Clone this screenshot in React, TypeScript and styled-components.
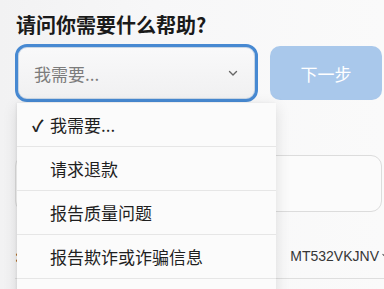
import React from "react";
import styled, { createGlobalStyle } from "styled-components";

const GlobalStyle = createGlobalStyle`
  html, body {
    margin: 0;
    padding: 0;
    background: #f6f6f7;
    overflow: hidden;
  }
  body {
    font-family: "Inter", "Noto Sans CJK SC", sans-serif;
    color: #1c1c1e;
  }
`;

const Page = styled.div`
  display: flex;
  flex-direction: column;
  width: 384px;
  height: 289px;
  box-sizing: border-box;
  padding: 11px 2px 0 15px;
  background: linear-gradient(90deg, #f2f2f3 0%, #f7f7f8 40%, #fafafa 100%);
`;

const Title = styled.h2`
  margin: 0 0 0 1px;
  font-family: "Noto Sans CJK SC", sans-serif;
  font-size: 20px;
  font-weight: 700;
  line-height: 28px;
  color: #1a1a1a;
`;

const TopRow = styled.div`
  display: flex;
  align-items: center;
  gap: 12px;
  margin-top: 5px;
`;

const SelectWrap = styled.div`
  position: relative;
  width: 243px;
  flex-shrink: 0;
`;

const SelectBox = styled.div`
  display: flex;
  align-items: center;
  justify-content: space-between;
  height: 58px;
  box-sizing: border-box;
  padding: 0 16px 0 16px;
  border: 3px solid #4789d2;
  border-radius: 12px;
  background: linear-gradient(180deg, #f9f9fa 0%, #f0f0f1 100%);
  box-shadow: inset 0 0 0 1px #c9d6e4;
`;

const Placeholder = styled.span`
  font-family: "Noto Sans CJK SC", sans-serif;
  font-size: 17px;
  color: #7c7c7c;
`;

const NextButton = styled.button`
  flex: 1;
  height: 54px;
  border: none;
  border-radius: 10px;
  background: #a9c8eb;
  color: #ffffff;
  font-family: "Noto Sans CJK SC", sans-serif;
  font-size: 17px;
`;

const Menu = styled.div`
  position: absolute;
  top: 59px;
  left: 2px;
  width: 259px;
  padding-bottom: 30px;
  background: #fbfbfb;
  box-shadow: 0 4px 14px rgba(0, 0, 0, 0.12), -1px 0 2px rgba(0, 0, 0, 0.06);
  z-index: 5;
`;

const MenuItem = styled.div`
  display: flex;
  align-items: center;
  height: 43px;
  padding-left: 15px;
  border-bottom: 1px solid #e6e6e6;
  font-family: "Noto Sans CJK SC", sans-serif;
  font-size: 17px;
  color: #1f1f1f;
`;

const Check = styled.span`
  width: 18px;
  font-size: 16px;
  font-weight: 700;
  color: #222;
`;

const Card = styled.div`
  height: 55px;
  margin-top: 53px;
  border: 1px solid #dcdcdc;
  border-radius: 11px;
  background: #fbfbfb;
`;

const InfoRow = styled.div`
  display: flex;
  align-items: center;
  justify-content: space-between;
  height: 45px;
  margin-top: 21px;
  margin-right: -8px;
  border-bottom: 1px solid #dedede;
`;

const InfoLabel = styled.span`
  font-size: 16px;
  font-weight: 700;
  color: #333;
`;

const InfoValue = styled.span`
  display: flex;
  align-items: center;
  gap: 2px;
  font-family: "Liberation Sans", sans-serif;
  font-size: 14px;
  color: #363636;
`;

const Chevron = ({ size, color }: { size: number; color: string }) => (
  <svg width={size} height={size} viewBox="0 0 12 12" fill="none">
    <path d="M2.5 4.5 L6 8 L9.5 4.5" stroke={color} strokeWidth="1.4" strokeLinecap="round" strokeLinejoin="round" />
  </svg>
);

const options = ["我需要...", "请求退款", "报告质量问题", "报告欺诈或诈骗信息"];

export default function App() {
  return (
    <>
      <GlobalStyle />
      <Page>
        <Title>请问你需要什么帮助?</Title>
        <TopRow>
          <SelectWrap>
            <SelectBox>
              <Placeholder>我需要...</Placeholder>
              <Chevron size={12} color="#666" />
            </SelectBox>
            <Menu>
              {options.map((o, i) => (
                <MenuItem key={o}>
                  <Check>{i === 0 ? "✓" : ""}</Check>
                  {o}
                </MenuItem>
              ))}
            </Menu>
          </SelectWrap>
          <NextButton>下一步</NextButton>
        </TopRow>
        <Card />
        <InfoRow>
          <InfoLabel>:</InfoLabel>
          <InfoValue>
            MT532VKJNV
            <Chevron size={9} color="#555" />
          </InfoValue>
        </InfoRow>
      </Page>
    </>
  );
}
